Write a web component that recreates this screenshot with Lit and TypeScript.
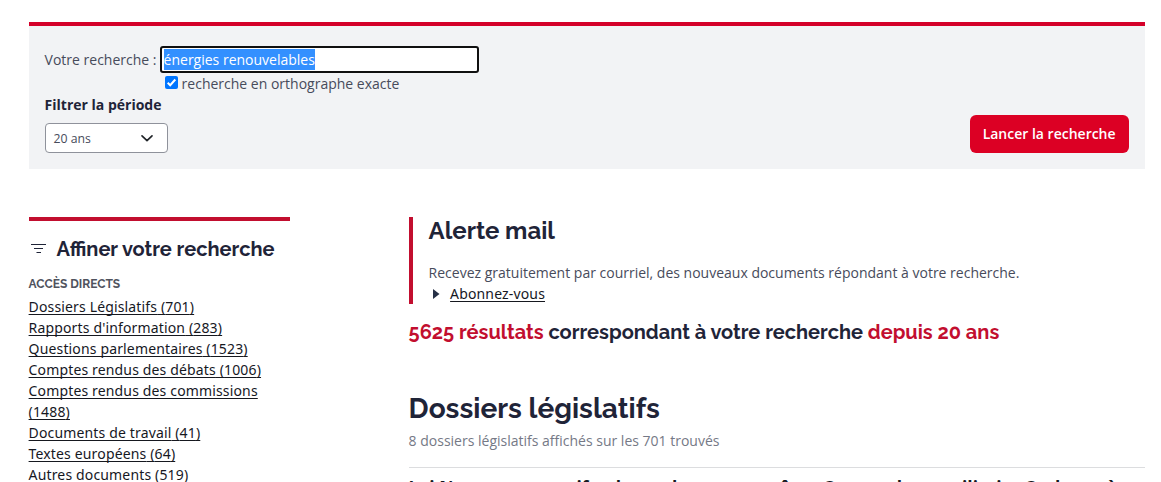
import { LitElement, css, html } from 'lit';
import { customElement } from 'lit/decorators.js';

interface DirectLink {
  label: string;
  count: number;
}

const DIRECT_LINKS: DirectLink[] = [
  { label: 'Dossiers Législatifs', count: 701 },
  { label: "Rapports d'information", count: 283 },
  { label: 'Questions parlementaires', count: 1523 },
  { label: 'Comptes rendus des débats', count: 1006 },
  { label: 'Comptes rendus des commissions', count: 1488 },
  { label: 'Documents de travail', count: 41 },
  { label: 'Textes européens', count: 64 },
  { label: 'Autres documents', count: 519 }
];

@customElement('search-form')
class SearchForm extends LitElement {
  static styles = css`
    :host {
      display: block;
      box-sizing: border-box;
      height: 147px;
      padding: 20px 16px 16px;
      border-top: 4px solid #d40029;
      background: #f2f3f5;
    }

    .row {
      display: flex;
      align-items: center;
    }

    .label {
      width: 115px;
      white-space: nowrap;
    }

    .field {
      box-sizing: border-box;
      width: 319px;
      height: 27px;
      padding: 1px 2px;
      border: 2px solid #101010;
      border-radius: 3px;
      background: #fff;
      line-height: 21px;
    }

    .selected {
      display: block;
      width: fit-content;
      background: #3390ff;
      color: #fff;
    }

    .exact {
      gap: 4px;
      height: 21px;
      padding-left: 120px;
    }

    .exact svg {
      display: block;
      margin-top: -2px;
    }

    .period {
      margin: 0;
      color: #1f2438;
      font-weight: 700;
      line-height: 21px;
    }

    .bottom {
      justify-content: space-between;
      margin-top: 8px;
    }

    .select {
      display: flex;
      align-items: center;
      justify-content: space-between;
      box-sizing: border-box;
      width: 123px;
      height: 30px;
      padding: 0 13px 0 8px;
      border: 1px solid #8f929b;
      border-radius: 4px;
      background: #fff;
      font-size: 12.25px;
    }

    .submit {
      box-sizing: border-box;
      width: 159px;
      height: 38px;
      margin-top: -8px;
      padding: 0;
      border: 0;
      border-radius: 6px;
      background: #dc0024;
      color: #fff;
      font: 600 14px/38px 'Open Sans', sans-serif;
    }
  `;

  render() {
    return html`
      <div class="row">
        <span class="label">Votre recherche :</span>
        <div class="field"><span class="selected">énergies renouvelables</span></div>
      </div>
      <div class="row exact">
        <svg width="13" height="13" viewBox="0 0 13 13">
          <rect width="13" height="13" rx="2" fill="#0075ff" />
          <path d="M2.7 6.7 5.2 9.2 10.3 3.5" fill="none" stroke="#fff" stroke-width="2" />
        </svg>
        <span>recherche en orthographe exacte</span>
      </div>
      <p class="period">Filtrer la période</p>
      <div class="row bottom">
        <div class="select">
          <span>20 ans</span>
          <svg width="14" height="10" viewBox="0 0 14 10">
            <path d="M2 2.8 7 7.6 12 2.8" fill="none" stroke="#212529" stroke-width="1.7" stroke-linecap="round" stroke-linejoin="round" />
          </svg>
        </div>
        <button class="submit">Lancer la recherche</button>
      </div>
    `;
  }
}

@customElement('search-filters')
class SearchFilters extends LitElement {
  static styles = css`
    :host {
      display: block;
      box-sizing: border-box;
      width: 261px;
      border-top: 4px solid #c20e2f;
    }

    .heading {
      display: flex;
      align-items: center;
      gap: 9px;
      height: 28px;
      margin: 14px 0 12px;
      color: #1f2438;
      font: 700 20px/28px Raleway, Lato, sans-serif;
      white-space: nowrap;
    }

    .subtitle {
      margin: 0;
      color: #50535e;
      font: 700 12px/18px Raleway, Lato, sans-serif;
      white-space: nowrap;
    }

    ul {
      margin: 3px 0 0;
      padding: 0;
      list-style: none;
    }

    a {
      color: #16181f;
      font-family: 'Noto Sans', 'Open Sans', sans-serif;
      letter-spacing: 0.15px;
      text-decoration: underline;
      text-underline-offset: 2px;
      text-decoration-thickness: 1px;
      text-decoration-skip-ink: none;
    }
  `;

  render() {
    return html`
      <h2 class="heading">
        <svg width="19" height="14" viewBox="0 0 19 14">
          <path d="M2 2.5H17M5 6.5H14M7.5 10.5H12" fill="none" stroke="#1f2438" stroke-width="1.1" />
        </svg>
        <span>Affiner votre recherche</span>
      </h2>
      <h3 class="subtitle">ACCÈS DIRECTS</h3>
      <ul>
        ${DIRECT_LINKS.map(link => html`<li><a href="#">${link.label} (${link.count})</a></li>`)}
      </ul>
    `;
  }
}

@customElement('search-results')
class SearchResults extends LitElement {
  static styles = css`
    :host {
      display: block;
      min-width: 0;
    }

    h1, h2, h3, p {
      margin: 0;
      white-space: nowrap;
    }

    h1, h2, h3 {
      color: #1f2438;
      font-family: Raleway, Lato, sans-serif;
    }

    .alert {
      box-sizing: border-box;
      height: 87px;
      padding-left: 16px;
      border-left: 4px solid #c20e2f;
    }

    .alert-title {
      padding-bottom: 17px;
      font-size: 24px;
      font-weight: 700;
      line-height: 28px;
    }

    .subscribe {
      display: flex;
      align-items: center;
      gap: 10.5px;
      padding-left: 3px;
    }

    .subscribe a {
      color: #16181f;
      font-family: 'Noto Sans', 'Open Sans', sans-serif;
      letter-spacing: 0.15px;
      text-underline-offset: 2px;
      text-decoration-thickness: 1px;
      text-decoration-skip-ink: none;
    }

    .summary {
      margin-top: 14px;
      font-size: 20px;
      font-weight: 700;
      line-height: 28px;
    }

    .red {
      color: #c20e2f;
    }

    .section {
      margin-top: 45px;
      font-size: 28px;
      font-weight: 700;
      line-height: 36px;
    }

    .count {
      margin-top: 3px;
      color: #757986;
    }

    .law {
      margin-top: 16px;
      padding-top: 7px;
      border-top: 1px solid #dcdddf;
      color: #16181f;
      font-family: 'Open Sans', sans-serif;
      font-size: 17.5px;
      font-weight: 700;
      line-height: 24px;
    }
  `;

  render() {
    return html`
      <section class="alert">
        <h2 class="alert-title">Alerte mail</h2>
        <p>Recevez gratuitement par courriel, des nouveaux documents répondant à votre recherche.</p>
        <div class="subscribe">
          <svg width="8" height="12" viewBox="0 0 8 12">
            <path d="M1 1 7.5 6 1 11Z" fill="#273046" />
          </svg>
          <a href="#">Abonnez-vous</a>
        </div>
      </section>
      <h2 class="summary">
        <span class="red">5625 résultats</span> correspondant à votre recherche
        <span class="red">depuis 20 ans</span>
      </h2>
      <h1 class="section">Dossiers législatifs</h1>
      <p class="count">8 dossiers législatifs affichés sur les 701 trouvés</p>
      <h3 class="law">Loi Nuance normatif et le nord en zones crôses Course chaos utilitaire Cachette à</h3>
    `;
  }
}

@customElement('app-root')
class AppRoot extends LitElement {
  static styles = css`
    :host {
      display: block;
      box-sizing: border-box;
      width: 1161px;
      height: 482px;
      padding: 22px 16.4px 0 28.6px;
      overflow: hidden;
      background: #fff;
      color: #474b5b;
      font: 400 14px/21px 'Open Sans', sans-serif;
    }

    .columns {
      display: grid;
      grid-template-columns: 261px 1fr;
      gap: 119px;
      align-items: start;
      margin-top: 48px;
    }
  `;

  render() {
    return html`
      <search-form></search-form>
      <main class="columns">
        <search-filters></search-filters>
        <search-results></search-results>
      </main>
    `;
  }
}
